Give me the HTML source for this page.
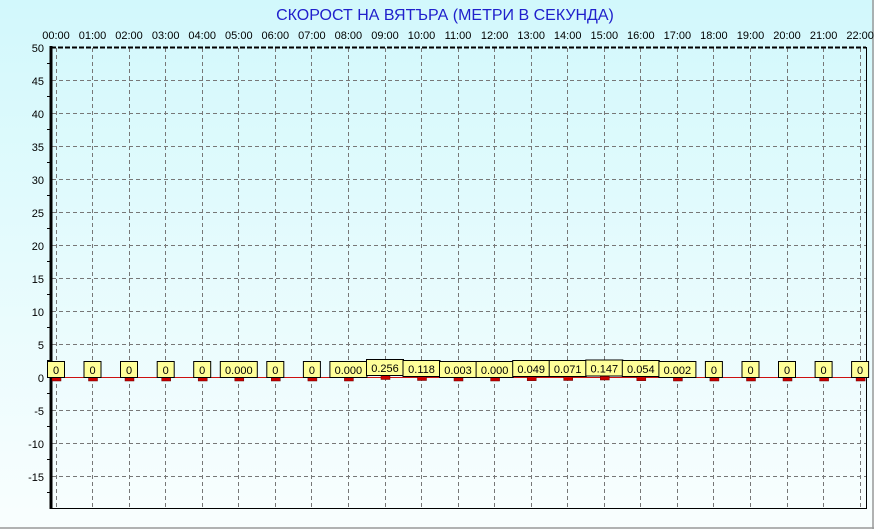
<!DOCTYPE html>
<html><head><meta charset="utf-8"><style>
html,body{margin:0;padding:0;width:874px;height:529px;overflow:hidden;background:#fff}
svg{display:block;font-family:"Liberation Sans",sans-serif}
</style></head><body>
<svg width="874" height="529" viewBox="0 0 874 529" xmlns="http://www.w3.org/2000/svg">
<defs><linearGradient id="bg" x1="0" y1="0" x2="0" y2="1">
<stop offset="0" stop-color="#d2f8fc"/><stop offset="1" stop-color="#f9fefe"/></linearGradient></defs>
<rect x="0" y="0" width="874" height="529" fill="url(#bg)"/>
<line x1="0" y1="528" x2="874" y2="528" stroke="#999" stroke-width="1.5"/>
<line x1="873" y1="0" x2="873" y2="529" stroke="#999" stroke-width="1.5"/>
<text x="445" y="20" text-anchor="middle" font-size="16" fill="#2020cc">СКОРОСТ НА ВЯТЪРА (МЕТРИ В СЕКУНДА)</text>
<g font-size="11" fill="#000" text-anchor="middle">
<text x="56" y="39">00:00</text><text x="92.5" y="39">01:00</text><text x="129" y="39">02:00</text><text x="165.7" y="39">03:00</text><text x="202.2" y="39">04:00</text><text x="238.8" y="39">05:00</text><text x="275.3" y="39">06:00</text><text x="311.9" y="39">07:00</text><text x="348.4" y="39">08:00</text><text x="385" y="39">09:00</text><text x="421.5" y="39">10:00</text><text x="458" y="39">11:00</text><text x="494.6" y="39">12:00</text><text x="531.2" y="39">13:00</text><text x="567.7" y="39">14:00</text><text x="604.3" y="39">15:00</text><text x="640.8" y="39">16:00</text><text x="677.4" y="39">17:00</text><text x="713.9" y="39">18:00</text><text x="750.5" y="39">19:00</text><text x="787" y="39">20:00</text><text x="823.6" y="39">21:00</text><text x="860.1" y="39">22:00</text>
</g>
<g font-size="11" fill="#000" text-anchor="end">
<text x="44" y="52">50</text><text x="44" y="85">45</text><text x="44" y="118">40</text><text x="44" y="151">35</text><text x="44" y="184">30</text><text x="44" y="217">25</text><text x="44" y="250">20</text><text x="44" y="283">15</text><text x="44" y="316">10</text><text x="44" y="349">5</text><text x="44" y="382">0</text><text x="44" y="415">-5</text><text x="44" y="448">-10</text><text x="44" y="481">-15</text>
</g>
<g stroke="#777" stroke-width="1" stroke-dasharray="4,3" fill="none">
<path d="M52 80.5H866M52 113.5H866M52 146.5H866M52 179.5H866M52 212.5H866M52 245.5H866M52 278.5H866M52 311.5H866M52 344.5H866M52 410.5H866M52 443.5H866M52 476.5H866"/>
<path d="M56.5 48V508M92.5 48V508M129.5 48V508M165.5 48V508M202.5 48V508M238.5 48V508M275.5 48V508M311.5 48V508M348.5 48V508M385.5 48V508M421.5 48V508M458.5 48V508M494.5 48V508M531.5 48V508M567.5 48V508M604.5 48V508M640.5 48V508M677.5 48V508M713.5 48V508M750.5 48V508M787.5 48V508M823.5 48V508M860.5 48V508"/>
</g>
<path d="M51 47.5H866" stroke="#000" stroke-width="2" stroke-dasharray="5,2"/>
<path d="M51 47V508.5H866.5V47" stroke="#000" stroke-width="1" fill="none"/>
<line x1="51" y1="46" x2="51" y2="509" stroke="#000" stroke-width="3"/>
<g stroke="#000"><path d="M47 63.5H51M47 96.5H51M47 129.5H51M47 162.5H51M47 195.5H51M47 228.5H51M47 261.5H51M47 294.5H51M47 327.5H51M47 360.5H51M47 393.5H51M47 426.5H51M47 459.5H51M47 492.5H51"/></g>
<line x1="52" y1="377.5" x2="866" y2="377.5" stroke="#cc1010" stroke-width="1"/>
<g fill="#cc0000" stroke="#600" stroke-width="0.5">
<rect x="52" y="377" width="9" height="4"/><rect x="88.5" y="377" width="9" height="4"/><rect x="125" y="377" width="9" height="4"/><rect x="161.7" y="377" width="9" height="4"/><rect x="198.2" y="377" width="9" height="4"/><rect x="234.8" y="377" width="9" height="4"/><rect x="271.3" y="377" width="9" height="4"/><rect x="307.9" y="377" width="9" height="4"/><rect x="344.4" y="377" width="9" height="4"/><rect x="381" y="375.5" width="9" height="4"/><rect x="417.5" y="376.5" width="9" height="4"/><rect x="454" y="377" width="9" height="4"/><rect x="490.6" y="377" width="9" height="4"/><rect x="527.2" y="376.7" width="9" height="4"/><rect x="563.7" y="376.5" width="9" height="4"/><rect x="600.3" y="376" width="9" height="4"/><rect x="636.8" y="376.7" width="9" height="4"/><rect x="673.4" y="377" width="9" height="4"/><rect x="709.9" y="377" width="9" height="4"/><rect x="746.5" y="377" width="9" height="4"/><rect x="783" y="377" width="9" height="4"/><rect x="819.6" y="377" width="9" height="4"/><rect x="856.1" y="377" width="9" height="4"/>
</g>
<g fill="#ffff99" stroke="#000" stroke-width="1">
<rect x="47.5" y="361.5" width="17" height="16"/><rect x="84" y="361.5" width="17" height="16"/><rect x="120.5" y="361.5" width="17" height="16"/><rect x="157.2" y="361.5" width="17" height="16"/><rect x="193.7" y="361.5" width="17" height="16"/><rect x="220.3" y="361.5" width="37" height="16"/><rect x="266.8" y="361.5" width="17" height="16"/><rect x="303.4" y="361.5" width="17" height="16"/><rect x="329.9" y="361.5" width="37" height="16"/><rect x="366.5" y="359.5" width="37" height="16"/><rect x="403" y="360.5" width="37" height="16"/><rect x="439.5" y="361.5" width="37" height="16"/><rect x="476.1" y="361.5" width="37" height="16"/><rect x="512.7" y="360.5" width="37" height="16"/><rect x="549.2" y="360.5" width="37" height="16"/><rect x="585.8" y="360" width="37" height="16"/><rect x="622.3" y="360.5" width="37" height="16"/><rect x="658.9" y="361.5" width="37" height="16"/><rect x="705.4" y="361.5" width="17" height="16"/><rect x="742" y="361.5" width="17" height="16"/><rect x="778.5" y="361.5" width="17" height="16"/><rect x="815.1" y="361.5" width="17" height="16"/><rect x="851.6" y="361.5" width="17" height="16"/>
</g>
<g font-size="11" fill="#000" text-anchor="middle">
<text x="56" y="374">0</text><text x="92.5" y="374">0</text><text x="129" y="374">0</text><text x="165.7" y="374">0</text><text x="202.2" y="374">0</text><text x="238.8" y="374">0.000</text><text x="275.3" y="374">0</text><text x="311.9" y="374">0</text><text x="348.4" y="374">0.000</text><text x="385" y="372">0.256</text><text x="421.5" y="373">0.118</text><text x="458" y="374">0.003</text><text x="494.6" y="374">0.000</text><text x="531.2" y="373">0.049</text><text x="567.7" y="373">0.071</text><text x="604.3" y="372.5">0.147</text><text x="640.8" y="373">0.054</text><text x="677.4" y="374">0.002</text><text x="713.9" y="374">0</text><text x="750.5" y="374">0</text><text x="787" y="374">0</text><text x="823.6" y="374">0</text><text x="860.1" y="374">0</text>
</g>
</svg>
</body></html>
